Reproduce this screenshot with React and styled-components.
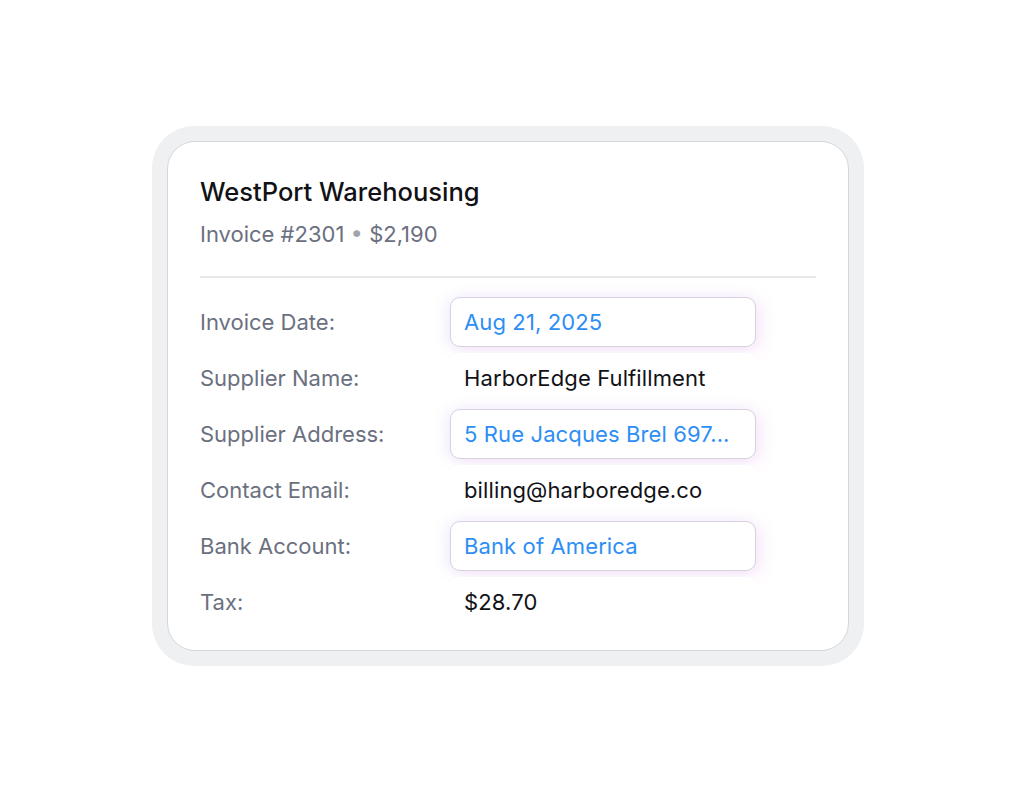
import React from "react";
import styled, { createGlobalStyle } from "styled-components";

const Global = createGlobalStyle`
  * { box-sizing: border-box; }
  html, body { margin: 0; padding: 0; background: #ffffff; }
  body { font-family: Inter, "Noto Sans", sans-serif; }
`;

const Page = styled.div`
  width: 1016px;
  height: 792px;
  display: flex;
  align-items: center;
  justify-content: center;
`;

const Frame = styled.div`
  width: 712px;
  height: 540px;
  padding: 15px;
  border-radius: 42px;
  background: #eff0f2;
`;

const Card = styled.div`
  height: 100%;
  background: #ffffff;
  border: 1px solid #d6d7db;
  border-radius: 28px;
  padding: 35px 32px 0 32px;
  display: flex;
  flex-direction: column;
`;

const Title = styled.div`
  font-size: 25.5px;
  font-weight: 500;
  color: #111216;
  line-height: 30px;
  letter-spacing: 0;
`;

const Subtitle = styled.div`
  margin-top: 14px;
  font-size: 22px;
  color: #6b7080;
  line-height: 26px;
`;

const Dot = styled.span`
  color: #a0a4ae;
`;

const Divider = styled.div`
  height: 2px;
  background: #e6e8eb;
  margin-top: 29px;
`;

const Rows = styled.div`
  margin-top: 19px;
  display: flex;
  flex-direction: column;
  gap: 6px;
`;

const Row = styled.div`
  display: grid;
  grid-template-columns: 250px 306px;
  align-items: center;
  height: 50px;
`;

const Label = styled.div`
  font-size: 22px;
  color: #6b7080;
`;

const Value = styled.div`
  height: 50px;
  display: flex;
  align-items: center;
  padding: 0 13px;
  font-size: 22px;
  letter-spacing: 0.12px;
  border-radius: 10px;
  color: ${(p) => (p.$highlight ? "#2d8ef5" : "#111216")};
  border: 1px solid ${(p) => (p.$highlight ? "#d8d1e2" : "transparent")};
  background: #ffffff;
  box-shadow: ${(p) =>
    p.$highlight
      ? "-5px 0 14px rgba(130, 150, 230, 0.10), 5px 3px 16px rgba(225, 120, 225, 0.18)"
      : "none"};
  white-space: nowrap;
  overflow: hidden;
`;

const rows = [
  { label: "Invoice Date:", value: "Aug 21, 2025", hl: true },
  { label: "Supplier Name:", value: "HarborEdge Fulfillment" },
  { label: "Supplier Address:", value: "5 Rue Jacques Brel 697...", hl: true },
  { label: "Contact Email:", value: "billing@harboredge.co" },
  { label: "Bank Account:", value: "Bank of America", hl: true },
  { label: "Tax:", value: "$28.70" },
];

export default function App() {
  return (
    <>
      <Global />
      <Page>
        <Frame>
          <Card>
            <Title>WestPort Warehousing</Title>
            <Subtitle>
              Invoice #2301 <Dot>•</Dot> $2,190
            </Subtitle>
            <Divider />
            <Rows>
              {rows.map((r) => (
                <Row key={r.label}>
                  <Label>{r.label}</Label>
                  <Value $highlight={r.hl}>{r.value}</Value>
                </Row>
              ))}
            </Rows>
          </Card>
        </Frame>
      </Page>
    </>
  );
}
